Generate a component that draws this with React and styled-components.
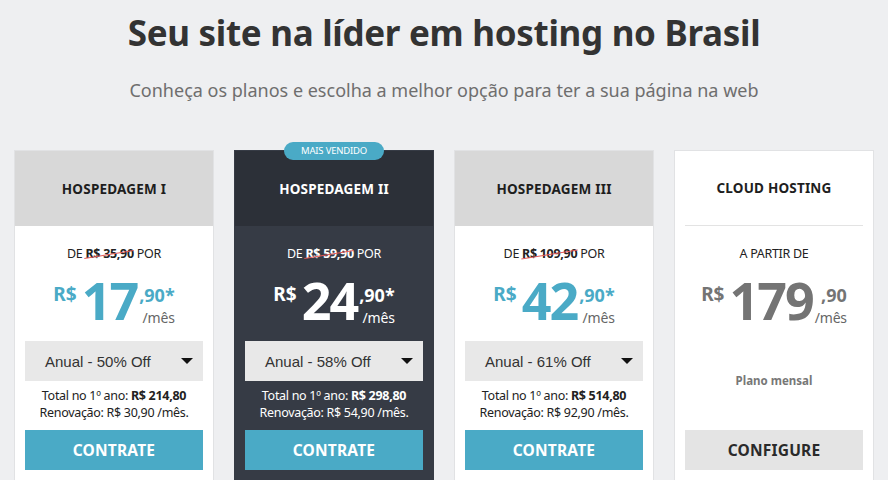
import React from "react";
import styled, { createGlobalStyle } from "styled-components";

const Global = createGlobalStyle`
  html, body { margin: 0; padding: 0; background: #eeeff1; }
  body { font-family: "Noto Sans", "Open Sans", sans-serif; color: #333; }
  * { box-sizing: border-box; }
`;

const Page = styled.div`
  width: 888px;
  height: 480px;
  overflow: hidden;
  background: #eeeff1;
  display: flex;
  flex-direction: column;
  align-items: center;
`;

const Title = styled.h1`
  margin: 10px 0 0;
  font-size: 35px;
  line-height: 46px;
  font-weight: 700;
  color: #333333;
  letter-spacing: -0.3px;
`;

const Subtitle = styled.p`
  margin: 22px 0 0;
  font-size: 18px;
  line-height: 24px;
  color: #6e6e6e;
  letter-spacing: 0;
`;

const Grid = styled.div`
  margin-top: 48px;
  display: grid;
  grid-template-columns: repeat(4, 200px);
  gap: 20px;
`;

const Card = styled.div`
  position: relative;
  height: 340px;
  display: flex;
  flex-direction: column;
  background: ${(p) => (p.$dark ? "#363b45" : "#ffffff")};
  border: 1px solid ${(p) => (p.$dark ? "#363b45" : "#e1e2e4")};
`;

const Badge = styled.div`
  position: absolute;
  top: -9px;
  left: 50%;
  transform: translateX(-50%);
  width: 100px;
  height: 18px;
  border-radius: 9px;
  background: #4aaac6;
  color: #fff;
  font-size: 9.5px;
  line-height: 18px;
  text-align: center;
  letter-spacing: -0.2px;
`;

const Header = styled.div`
  height: 75px;
  flex: none;
  display: flex;
  align-items: center;
  justify-content: center;
  background: ${(p) =>
    p.$variant === "dark" ? "#2c3038" : p.$variant === "plain" ? "#ffffff" : "#d8d8d8"};
  color: ${(p) => (p.$variant === "dark" ? "#ffffff" : "#1e1e1e")};
  font-size: 13.5px;
  font-weight: 700;
  letter-spacing: 0.2px;
  margin: ${(p) => (p.$variant === "plain" ? "0 10px" : "0")};
  border-bottom: ${(p) => (p.$variant === "plain" ? "1px solid #e3e3e3" : "none")};
`;

const Body = styled.div`
  flex: 1;
  display: flex;
  flex-direction: column;
  align-items: center;
  padding: 0 10px;
  color: ${(p) => (p.$dark ? "#ffffff" : "#222222")};
`;

const OldPrice = styled.div`
  margin-top: 20px;
  font-size: 12.5px;
  line-height: 16px;
  letter-spacing: -0.3px;
`;

const Struck = styled.span`
  position: relative;
  font-weight: 700;
  &::after {
    content: "";
    position: absolute;
    left: -1px;
    right: -1px;
    top: 55%;
    height: 1px;
    background: #e25a5a;
    transform: rotate(-9deg);
  }
`;

const PriceRow = styled.div`
  height: 79px;
  display: flex;
  align-items: flex-start;
  justify-content: center;
  padding-top: 12px;
  color: ${(p) => p.$color};
`;

const Currency = styled.span`
  font-size: 19px;
  font-weight: 700;
  line-height: 22px;
  margin-top: 9px;
  margin-right: 5px;
`;

const Big = styled.span`
  font-size: 52px;
  font-weight: 700;
  line-height: 52px;
  letter-spacing: -2px;
  padding-right: 2px;
`;

const Side = styled.div`
  display: flex;
  flex-direction: column;
  align-items: flex-end;
`;

const Cents = styled.span`
  font-size: 18px;
  font-weight: 700;
  line-height: 24px;
  margin-top: 9px;
`;

const Per = styled.span`
  font-size: 14px;
  line-height: 19px;
  margin-top: 1px;
  letter-spacing: -0.2px;
  color: ${(p) => p.$color};
`;

const Select = styled.div`
  width: 178px;
  height: 40px;
  flex: none;
  display: flex;
  align-items: center;
  justify-content: space-between;
  padding: 0 10px 0 20px;
  background: #e8e8e8;
  color: #333;
  font-family: "Liberation Sans", Arial, sans-serif;
  font-size: 15px;
`;

const Caret = styled.span`
  width: 0;
  height: 0;
  border-left: 6px solid transparent;
  border-right: 6px solid transparent;
  border-top: 6px solid #111;
`;

const Totals = styled.div`
  margin-top: 6px;
  font-size: 12.5px;
  line-height: 17px;
  text-align: center;
  letter-spacing: -0.3px;
  b { font-weight: 700; }
`;

const Note = styled.div`
  height: 79px;
  display: flex;
  align-items: center;
  justify-content: center;
  font-size: 11.5px;
  font-weight: 700;
  color: #777;
`;

const Button = styled.div`
  margin-top: ${(p) => (p.$muted ? "10px" : "9px")};
  width: 178px;
  height: 40px;
  flex: none;
  display: flex;
  align-items: center;
  justify-content: center;
  background: ${(p) => (p.$muted ? "#e4e4e4" : "#4aaac6")};
  color: ${(p) => (p.$muted ? "#2a2a2a" : "#ffffff")};
  font-size: 15.5px;
  font-weight: 700;
  letter-spacing: 0.2px;
`;

const plans = [
  { name: "HOSPEDAGEM I", old: "R$ 35,90", price: "17", off: "50%", total: "R$ 214,80", renew: "R$ 30,90" },
  { name: "HOSPEDAGEM II", old: "R$ 59,90", price: "24", off: "58%", total: "R$ 298,80", renew: "R$ 54,90", dark: true },
  { name: "HOSPEDAGEM III", old: "R$ 109,90", price: "42", off: "61%", total: "R$ 514,80", renew: "R$ 92,90" },
];

function Price({ value, star, color, perColor }) {
  return (
    <PriceRow $color={color}>
      <Currency>R$</Currency>
      <Big>{value}</Big>
      <Side>
        <Cents>,90{star ? "*" : ""}</Cents>
        <Per $color={perColor}>/mês</Per>
      </Side>
    </PriceRow>
  );
}

export default function App() {
  return (
    <Page>
      <Global />
      <Title>Seu site na líder em hosting no Brasil</Title>
      <Subtitle>Conheça os planos e escolha a melhor opção para ter a sua página na web</Subtitle>
      <Grid>
        {plans.map((p) => (
          <Card key={p.name} $dark={p.dark}>
            {p.dark && <Badge>MAIS VENDIDO</Badge>}
            <Header $variant={p.dark ? "dark" : "grey"}>{p.name}</Header>
            <Body $dark={p.dark}>
              <OldPrice>
                DE <Struck>{p.old}</Struck> POR
              </OldPrice>
              <Price
                value={p.price}
                star
                color={p.dark ? "#ffffff" : "#4aaac6"}
                perColor={p.dark ? "#ffffff" : "#666666"}
              />
              <Select>
                <span>Anual - {p.off} Off</span>
                <Caret />
              </Select>
              <Totals>
                Total no 1º ano: <b>{p.total}</b>
                <br />
                Renovação: {p.renew} /mês.
              </Totals>
              <Button>CONTRATE</Button>
            </Body>
          </Card>
        ))}
        <Card>
          <Header $variant="plain">CLOUD HOSTING</Header>
          <Body>
            <OldPrice>A PARTIR DE</OldPrice>
            <Price value="179" color="#747474" perColor="#666666" />
            <Note>Plano mensal</Note>
            <Button $muted>CONFIGURE</Button>
          </Body>
        </Card>
      </Grid>
    </Page>
  );
}
